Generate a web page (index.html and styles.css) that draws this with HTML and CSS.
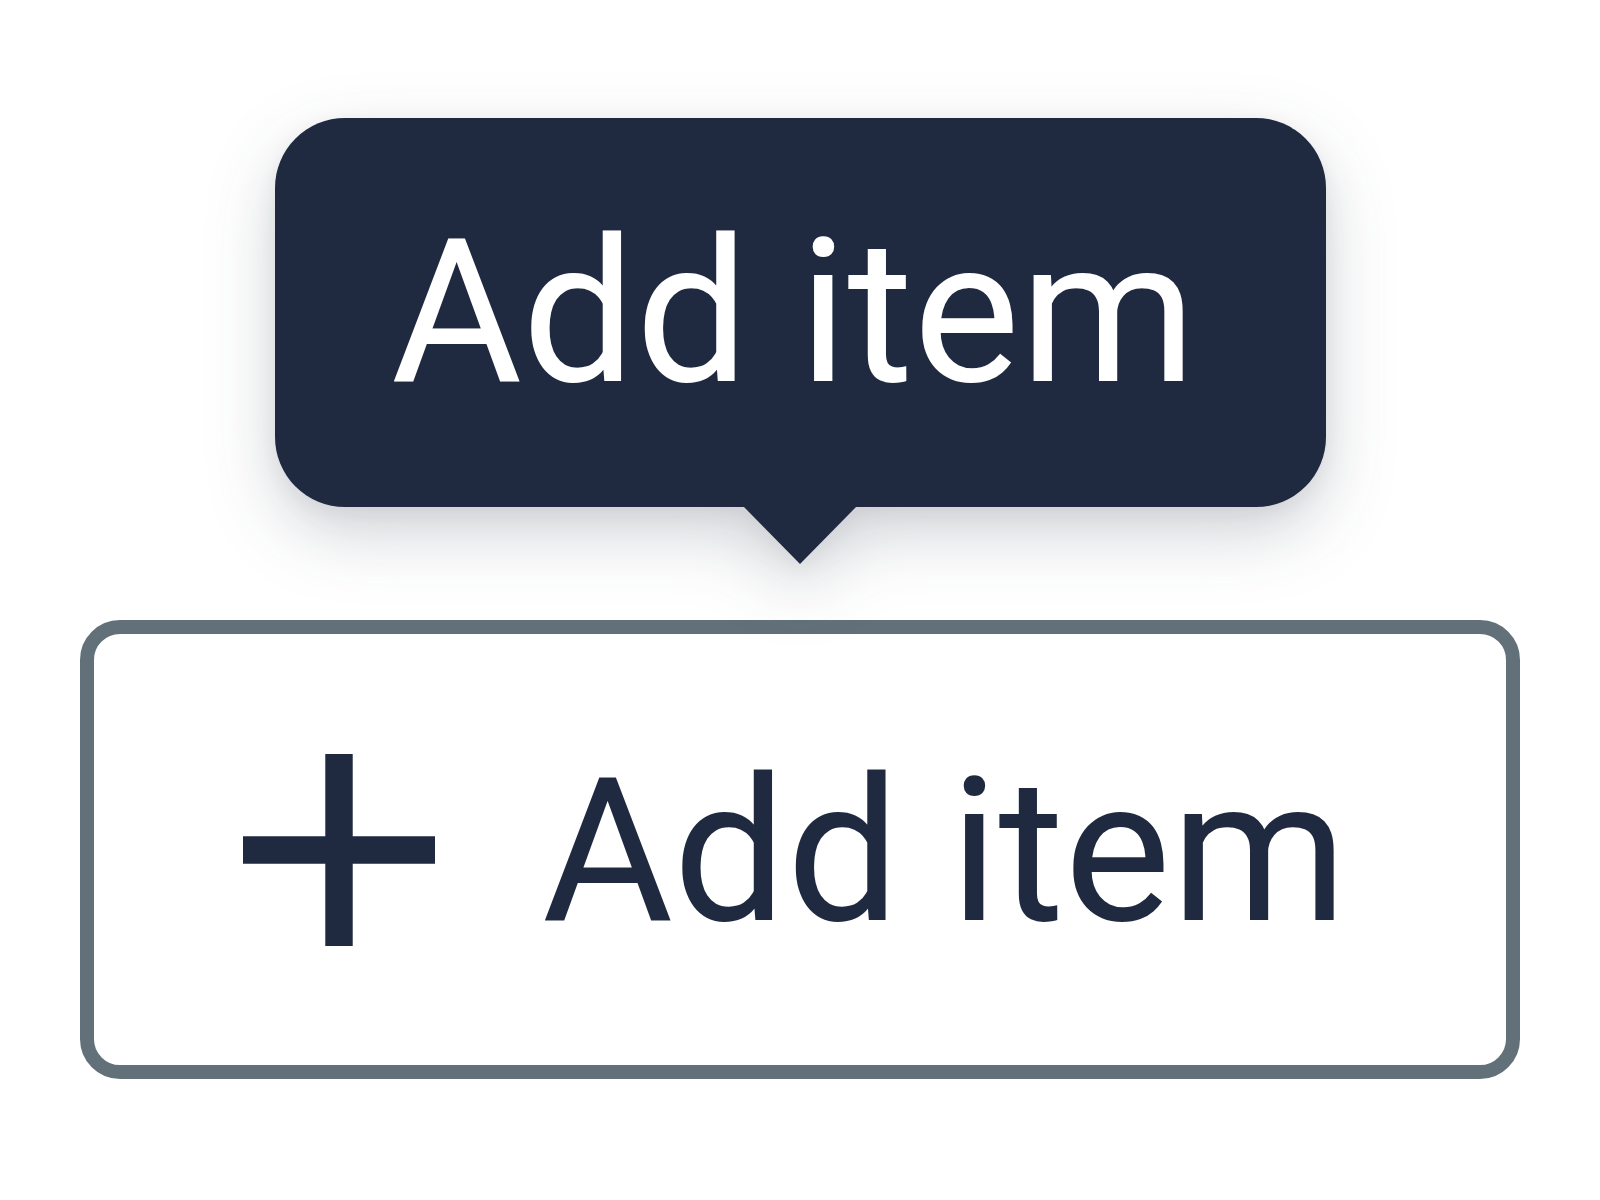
FILE: index.html
```html
<!DOCTYPE html>
<html lang="en">
<head>
<meta charset="utf-8">
<title>Add item</title>
<link rel="stylesheet" href="styles.css">
</head>
<body>
<main class="stage">
  <div class="tooltip" role="tooltip">Add item</div>
  <button class="add-button" type="button">
    <svg class="add-icon" viewBox="5 5 14 14" aria-hidden="true"><path d="M19 13h-6v6h-2v-6H5v-2h6V5h2v6h6v2z"/></svg>
    <span class="add-label">Add item</span>
  </button>
</main>
</body>
</html>
```
FILE: styles.css
```css
html, body {
  margin: 0;
  padding: 0;
  background: #ffffff;
}

body {
  width: 1600px;
  height: 1200px;
  overflow: hidden;
  font-family: Roboto, "Noto Sans", "Liberation Sans", sans-serif;
}

.stage {
  display: flex;
  flex-direction: column;
  align-items: flex-start;
  padding: 118px 0 0 80px;
}

.tooltip {
  position: relative;
  box-sizing: border-box;
  width: 1051px;
  height: 389px;
  margin-left: 195px;
  padding: 0 0 1px 116px;
  display: flex;
  align-items: center;
  background: #1f2a40;
  color: #ffffff;
  border-radius: 70px;
  font-size: 201px;
  line-height: 1;
  white-space: nowrap;
  filter: drop-shadow(0 26px 34px rgba(30, 41, 59, 0.2)) drop-shadow(0 6px 10px rgba(30, 41, 59, 0.06));
}

.tooltip::after {
  content: "";
  position: absolute;
  left: 50%;
  bottom: -57px;
  width: 0;
  height: 0;
  margin-left: -58px;
  border-left: 57px solid transparent;
  border-right: 57px solid transparent;
  border-top: 58px solid #1f2a40;
}

.add-button {
  box-sizing: border-box;
  margin-top: 113px;
  width: 1440px;
  height: 459px;
  display: flex;
  align-items: center;
  gap: 107px;
  padding: 0 0 0 149px;
  background: #ffffff;
  border: 14px solid #627179;
  border-radius: 40px;
  color: #1f2a40;
  font-family: Roboto, "Noto Sans", "Liberation Sans", sans-serif;
  font-size: 201px;
  line-height: 1;
  cursor: pointer;
}

.add-icon {
  width: 192px;
  height: 192px;
  flex: none;
  fill: #1f2a40;
}

.add-label {
  white-space: nowrap;
  padding-top: 3px;
}
```
